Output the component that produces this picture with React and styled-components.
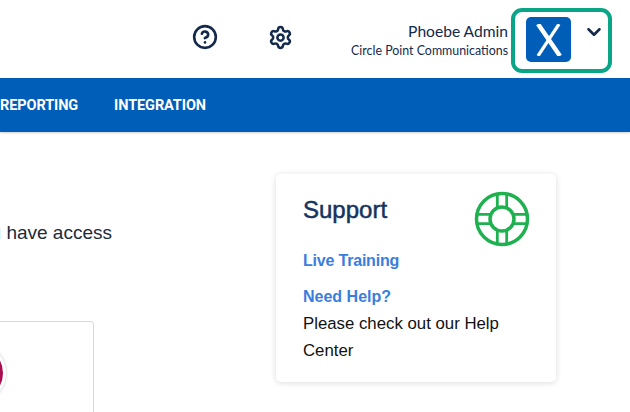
import React from 'react';
import styled, { createGlobalStyle } from 'styled-components';
import { ChevronDown, CircleHelp, Settings } from 'lucide-react';

const GlobalStyle = createGlobalStyle`
  html, body {
    margin: 0;
    height: 412px;
    overflow: hidden;
    background: #fff;
  }
`;

const Header = styled.header`
  height: 78px;
  display: flex;
  align-items: flex-start;
  padding-right: 18px;
  color: #14294b;
`;

const IconButton = styled.div`
  width: 26px;
  height: 26px;
  margin: 24px 0 0 ${(p) => p.$left}px;
  display: flex;
  align-items: center;
  justify-content: center;
`;

const User = styled.div`
  margin: 21px 3px 0 auto;
  text-align: right;
  font-family: Lato, sans-serif;
`;

const UserName = styled.div`
  font-size: 15.6px;
  line-height: 20px;
`;

const Company = styled.div`
  margin-top: 2px;
  font-size: 12.4px;
  line-height: 16px;
`;

const AccountBox = styled.div`
  box-sizing: border-box;
  width: 101px;
  height: 65px;
  margin-top: 8px;
  padding: 5px 0 0 11px;
  display: flex;
  align-items: flex-start;
  border: 4px solid #0aa587;
  border-radius: 11px;
`;

const Logo = styled.div`
  width: 45px;
  height: 45px;
  display: flex;
  align-items: center;
  justify-content: center;
  background: #005eb8;
  border-radius: 5px;
`;

const Chevron = styled.div`
  margin: 4px 0 0 12px;
  display: flex;
`;

const Nav = styled.nav`
  height: 54px;
  display: flex;
  align-items: center;
  background: #005eb8;
  box-shadow: 0 1px 2px rgba(0, 0, 0, 0.2);
  overflow: hidden;
`;

const NavItem = styled.div`
  margin-left: ${(p) => p.$left}px;
  flex: none;
  color: #fff;
  font-family: Roboto, 'Liberation Sans', sans-serif;
  font-size: 14.5px;
  font-weight: 700;
  letter-spacing: -0.1px;
`;

const Main = styled.main`
  display: flex;
  align-items: flex-start;
`;

const LeftColumn = styled.div`
  width: 276px;
  flex: none;
  display: flex;
  flex-direction: column;
  align-items: flex-start;
  overflow: hidden;
`;

const Intro = styled.p`
  width: 112px;
  margin: 90px 0 0;
  display: flex;
  justify-content: flex-end;
  white-space: nowrap;
  color: #1a2b3c;
  font-family: 'Liberation Sans', Arial, sans-serif;
  font-size: 19px;
  line-height: 22px;
`;

const ProductCard = styled.div`
  box-sizing: border-box;
  width: 94px;
  height: 120px;
  margin-top: 77px;
  padding-top: 21px;
  border: 1px solid #d9d9d9;
  border-left: 0;
  border-radius: 0 4px 0 0;
  overflow: hidden;
`;

const ProductBadge = styled.div`
  width: 54px;
  height: 54px;
  margin-left: -54px;
  background: #a90f4e;
  border: 3px solid #fff;
  border-radius: 50%;
  box-shadow: 0 0 3px rgba(0, 0, 0, 0.25);
`;

const SupportCard = styled.section`
  box-sizing: border-box;
  width: 280px;
  height: 208px;
  margin-top: 42px;
  padding: 22px 26px 0 27px;
  background: #fff;
  border-radius: 5px;
  box-shadow: 0 1px 6px rgba(0, 0, 0, 0.14);
  font-family: 'Liberation Sans', Arial, sans-serif;
`;

const SupportHead = styled.div`
  height: 51px;
  display: flex;
  justify-content: space-between;
  align-items: flex-start;
`;

const SupportTitle = styled.h2`
  margin: 0;
  color: #14335e;
  font-size: 24px;
  line-height: 28px;
  font-weight: 400;
  -webkit-text-stroke: 0.5px #14335e;
`;

const Ring = styled.svg`
  margin: -5px 0 0;
`;

const SupportLink = styled.a`
  display: block;
  margin-top: ${(p) => p.$top}px;
  color: #3b7ddd;
  font-size: 16px;
  line-height: 27px;
  font-weight: 700;
  letter-spacing: ${(p) => p.$spacing}px;
`;

const SupportText = styled.p`
  margin: 0;
  color: #111;
  font-size: 16.8px;
  line-height: 27px;
`;

function LifeRing() {
  return (
    <Ring width="56" height="56" viewBox="0 0 56 56" fill="none" stroke="#1fb14f" strokeWidth="3.5">
      <circle cx="28" cy="28" r="25.5" />
      <circle cx="28" cy="28" r="12" />
      <path
        strokeWidth="2.8"
        d="M23.3 3.5V16.5M32.7 3.5V16.5M23.3 39.5V52.5M32.7 39.5V52.5M3.5 23.3H16.5M3.5 32.7H16.5M39.5 23.3H52.5M39.5 32.7H52.5"
      />
    </Ring>
  );
}

export default function App() {
  return (
    <>
      <GlobalStyle />
      <Header>
        <IconButton $left={192}>
          <CircleHelp size={26} strokeWidth={2.4} />
        </IconButton>
        <IconButton $left={49}>
          <Settings size={25} strokeWidth={2.4} />
        </IconButton>
        <User>
          <UserName>Phoebe Admin</UserName>
          <Company>Circle Point Communications</Company>
        </User>
        <AccountBox>
          <Logo>
            <svg width="32" height="32" viewBox="0 0 32 32" fill="none" stroke="#fff">
              <path strokeWidth="4.4" d="M5 0L27 32" />
              <path strokeWidth="3.2" d="M26 0L5 32" />
            </svg>
          </Logo>
          <Chevron>
            <ChevronDown size={22} strokeWidth={2.8} />
          </Chevron>
        </AccountBox>
      </Header>
      <Nav>
        <NavItem $left={0}>REPORTING</NavItem>
        <NavItem $left={36}>INTEGRATION</NavItem>
      </Nav>
      <Main>
        <LeftColumn>
          <Intro>you have access</Intro>
          <ProductCard>
            <ProductBadge />
          </ProductCard>
        </LeftColumn>
        <SupportCard>
          <SupportHead>
            <SupportTitle>Support</SupportTitle>
            <LifeRing />
          </SupportHead>
          <SupportLink $top={0} $spacing={-0.2}>Live Training</SupportLink>
          <SupportLink $top={9} $spacing={0}>Need Help?</SupportLink>
          <SupportText>Please check out our Help Center</SupportText>
        </SupportCard>
      </Main>
    </>
  );
}
